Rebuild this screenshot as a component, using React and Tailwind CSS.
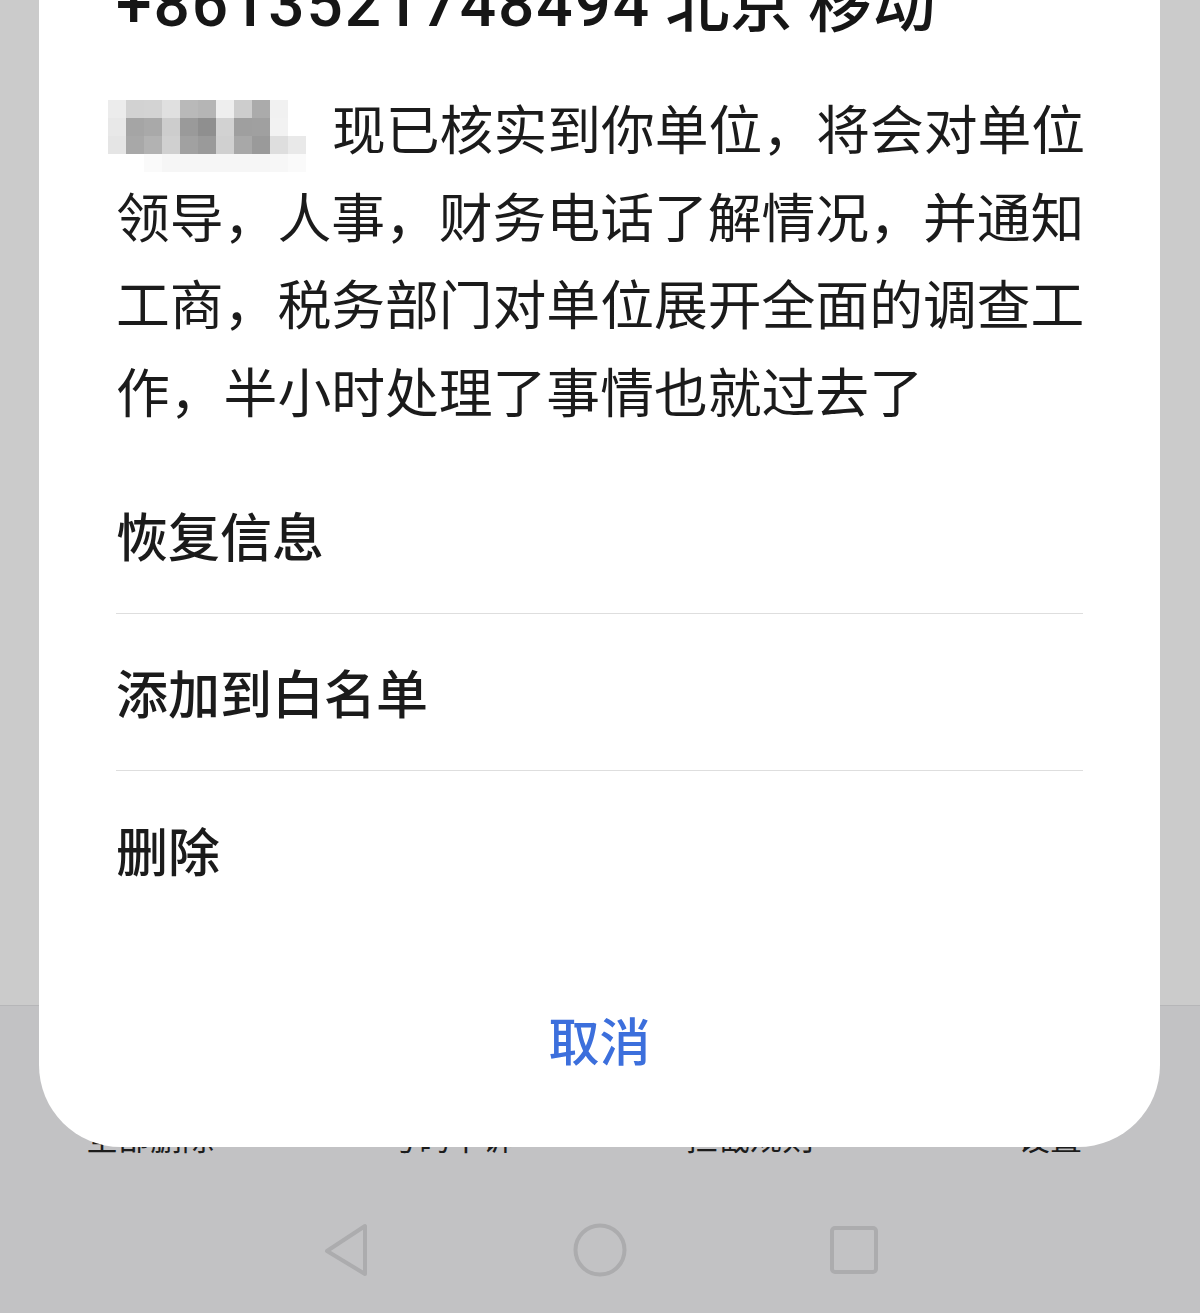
const mosaic = [
  ['#ececec', '#d2d2d2', '#d3d3d3', '#e0e0e0', '#b9b9b9', '#b5b5b5', '#eeeeee', '#cdcdcd', '#ababab', '#f1f1f1', '#ffffff'],
  ['#e8e8e8', '#a5a5a5', '#a9a9a9', '#cdcdcd', '#9a9a9a', '#8f8f8f', '#d2d2d2', '#9f9f9f', '#a0a0a0', '#f2f2f2', '#ffffff'],
  ['#e5e5e5', '#a8a8a8', '#b2b2b2', '#d0d0d0', '#a1a1a1', '#9a9a9a', '#d0d0d0', '#a8a8a8', '#9a9a9a', '#dedede', '#e9e9e9'],
  ['#ffffff', '#ffffff', '#fafafa', '#f6f6f6', '#f6f6f6', '#f6f6f6', '#f6f6f6', '#f6f6f6', '#f6f6f6', '#f7f7f7', '#fafafa'],
];

const BlurredName = () => (
  <span className="relative inline-block w-[216px] h-[54px] align-middle">
    <span className="absolute left-[-8px] top-[-8px] grid grid-cols-11">
      {mosaic.flat().map((c, i) => (
        <span key={i} className="block w-[18px] h-[18px]" style={{ backgroundColor: c }} />
      ))}
    </span>
  </span>
);

const MenuItem = ({ label, last }) => (
  <div className={`h-[157px] flex items-center ${last ? '' : 'border-b border-[#dedede]'}`}>
    <span className="text-[52px] font-medium text-[#1b1b1b]">{label}</span>
  </div>
);

const NavBar = () => (
  <div className="h-[133px] flex items-center justify-center gap-[200px] pt-[6px]">
    <svg width="52" height="56" viewBox="0 0 52 56" fill="none">
      <path d="M45 4 L45 52 L7 29 Z" stroke="#acacae" strokeWidth="4" strokeLinejoin="round" />
    </svg>
    <svg width="56" height="56" viewBox="0 0 56 56" fill="none">
      <circle cx="28" cy="28" r="24.5" stroke="#acacae" strokeWidth="4" />
    </svg>
    <svg width="52" height="52" viewBox="0 0 52 52" fill="none">
      <rect x="4" y="4" width="44" height="44" rx="3" stroke="#acacae" strokeWidth="4" />
    </svg>
  </div>
);

export default function App() {
  const font = { fontFamily: '"Noto Sans CJK SC", "Noto Sans", sans-serif' };
  return (
    <div className="relative w-[1200px] h-[1313px] overflow-hidden bg-[#c2c2c4]" style={font}>
      {/* dimmed page behind */}
      <div className="h-[1006px] bg-[#cbcbcb] border-b border-[#b6b6b8]" />
      <div className="h-[174px] pt-[110px] grid grid-cols-4 text-center text-[32px] leading-[40px] text-[#1c1c1c]">
        <span>全部删除</span>
        <span>号码申诉</span>
        <span>拦截规则</span>
        <span>设置</span>
      </div>
      <NavBar />

      {/* action sheet */}
      <div className="absolute left-[39px] top-0 w-[1121px] h-[1147px] bg-white rounded-b-[82px] px-[77px] flex flex-col">
        <div className="mt-[-34px] h-[64px] leading-[64px] text-[64px] font-medium text-[#161616] whitespace-nowrap">
          <span className="tracking-[1.9px]" style={{ fontFamily: 'Roboto, "Noto Sans CJK SC", sans-serif' }}>+8613521748494</span> 北京 移动
        </div>

        <div className="mt-[53px] text-[53.8px] leading-[87.5px] text-[#1b1b1b] whitespace-nowrap">
          <div>
            <BlurredName />现已核实到你单位，将会对单位
          </div>
          <div>领导，人事，财务电话了解情况，并通知</div>
          <div>工商，税务部门对单位展开全面的调查工</div>
          <div>作，半小时处理了事情也就过去了</div>
        </div>

        <div className="mt-[24px]">
          <MenuItem label="恢复信息" />
          <MenuItem label="添加到白名单" />
          <MenuItem label="删除" last />
        </div>

        <div className="mt-[61px] h-[100px] flex items-center justify-center">
          <span className="text-[51px] font-medium text-[#3c6fdc]">取消</span>
        </div>
      </div>
    </div>
  );
}
